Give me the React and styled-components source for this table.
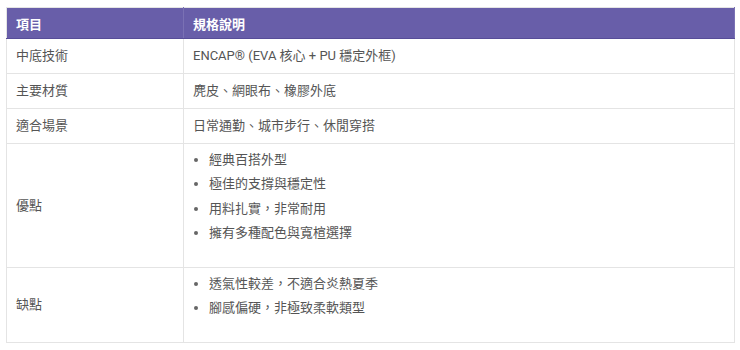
import React from 'react';
import styled, { createGlobalStyle } from 'styled-components';

const GlobalStyle = createGlobalStyle`
  body {
    margin: 0;
    background: #fff;
    font-family: Roboto, "Noto Sans CJK TC", sans-serif;
  }
`;

const Wrap = styled.div`
  padding: 7px 5px 0 6px;
`;

const Table = styled.table`
  width: 729px;
  border-collapse: collapse;
  border: 1px solid #e4e4e4;
  font-size: 13px;
  color: #555;
`;

const Th = styled.th`
  background: #685ea9;
  color: #fff;
  font-weight: 700;
  text-align: left;
  height: 31px;
  padding: 0 9px;
  border-right: 1px solid #7a71b4;
  border-bottom: 1px solid #574d98;
  box-sizing: border-box;
  width: ${(p) => p.w || 'auto'};
`;

const Td = styled.td`
  padding: 0 9px;
  height: ${(p) => p.h}px;
  border: 1px solid #e4e4e4;
  box-sizing: border-box;
  vertical-align: middle;
  line-height: 20px;
`;

const List = styled.ul`
  margin: 0 0 18px;
  padding: 0 0 0 16px;
  list-style: disc;

  li {
    line-height: 24.3px;
  }
  li::marker {
    color: #666;
  }
`;

const rows = [
  { k: '中底技術', v: 'ENCAP® (EVA 核心 + PU 穩定外框)', h: 35 },
  { k: '主要材質', v: '麂皮、網眼布、橡膠外底', h: 35 },
  { k: '適合場景', v: '日常通勤、城市步行、休閒穿搭', h: 35 },
  {
    k: '優點',
    v: ['經典百搭外型', '極佳的支撐與穩定性', '用料扎實，非常耐用', '擁有多種配色與寬楦選擇'],
    h: 124,
  },
  { k: '缺點', v: ['透氣性較差，不適合炎熱夏季', '腳感偏硬，非極致柔軟類型'], h: 75 },
];

export default function App() {
  return (
    <Wrap>
      <GlobalStyle />
      <Table>
        <thead>
          <tr>
            <Th w="177px">項目</Th>
            <Th>規格說明</Th>
          </tr>
        </thead>
        <tbody>
          {rows.map((r) => (
            <tr key={r.k}>
              <Td h={r.h}>{r.k}</Td>
              <Td h={r.h}>
                {Array.isArray(r.v) ? (
                  <List>
                    {r.v.map((i) => (
                      <li key={i}>{i}</li>
                    ))}
                  </List>
                ) : (
                  r.v
                )}
              </Td>
            </tr>
          ))}
        </tbody>
      </Table>
    </Wrap>
  );
}
